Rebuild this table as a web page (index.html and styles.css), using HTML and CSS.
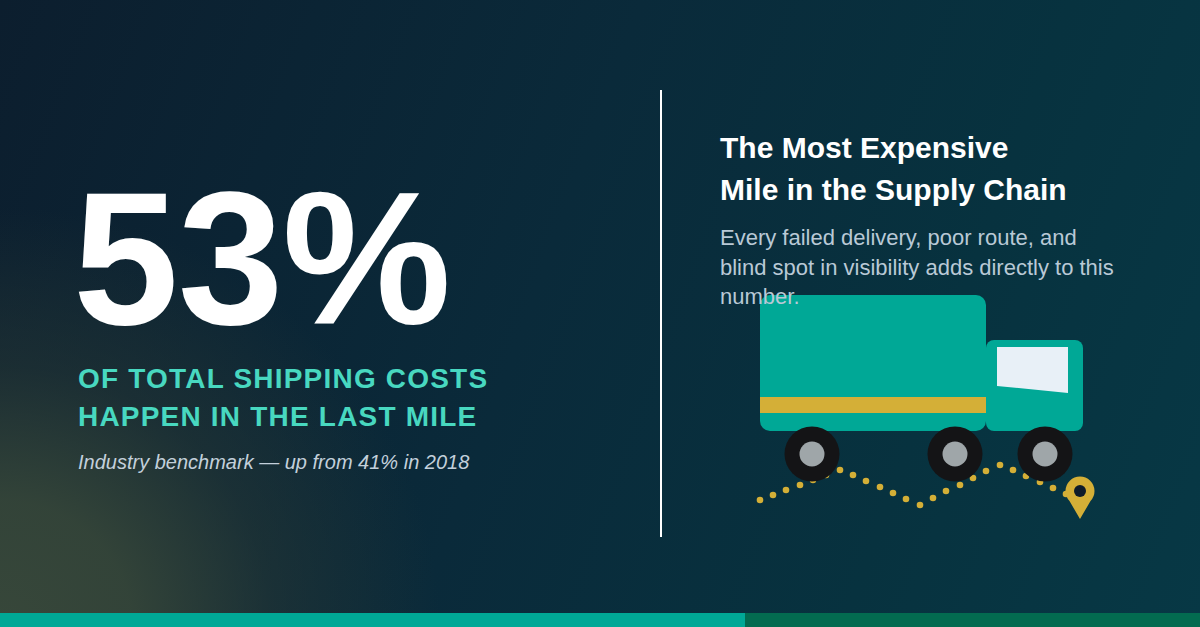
FILE: index.html
```html
<!DOCTYPE html>
<html lang="en">
<head>
<meta charset="utf-8">
<title>53% of total shipping costs happen in the last mile</title>
<link rel="stylesheet" href="styles.css">
</head>
<body>
<div class="page">
  <div class="stage">
    <section class="stat">
      <div class="stat-number">53%</div>
      <div class="stat-label">OF TOTAL SHIPPING COSTS<br>HAPPEN IN THE LAST MILE</div>
      <div class="stat-note">Industry benchmark — up from 41% in 2018</div>
    </section>
    <div class="divider"></div>
    <section class="detail">
      <h2 class="detail-title">The Most Expensive<br>Mile in the Supply Chain</h2>
      <p class="detail-text">Every failed delivery, poor route, and blind spot in visibility adds directly to this number.</p>
      <svg class="truck" viewBox="750 290 350 235" width="350" height="235" aria-hidden="true">
        <g fill="#d4af37">
          <circle cx="760" cy="500" r="3.3"/><circle cx="773" cy="495" r="3.3"/><circle cx="786" cy="490" r="3.3"/>
          <circle cx="800" cy="485" r="3.3"/><circle cx="813" cy="480" r="3.3"/><circle cx="826" cy="475" r="3.3"/>
          <circle cx="840" cy="470" r="3.3"/><circle cx="853" cy="475" r="3.3"/><circle cx="866" cy="481" r="3.3"/>
          <circle cx="880" cy="487" r="3.3"/><circle cx="893" cy="493" r="3.3"/><circle cx="906" cy="499" r="3.3"/>
          <circle cx="920" cy="505" r="3.3"/><circle cx="933" cy="498" r="3.3"/><circle cx="946" cy="491" r="3.3"/>
          <circle cx="960" cy="485" r="3.3"/><circle cx="973" cy="478" r="3.3"/><circle cx="986" cy="471" r="3.3"/>
          <circle cx="1000" cy="465" r="3.3"/><circle cx="1013" cy="470" r="3.3"/><circle cx="1026" cy="476" r="3.3"/>
          <circle cx="1040" cy="482" r="3.3"/><circle cx="1053" cy="488" r="3.3"/><circle cx="1066" cy="494" r="3.3"/>
        </g>
        <rect x="760" y="295" width="226" height="136" rx="10" fill="#00a896"/>
        <rect x="760" y="397" width="226" height="16" fill="#d4af37"/>
        <rect x="986" y="340" width="97" height="91" rx="8" fill="#00a896"/>
        <polygon points="997,347 1068,347 1068,393 997,386" fill="#e8f0f7"/>
        <circle cx="812" cy="454" r="27.5" fill="#141416"/>
        <circle cx="812" cy="454" r="12.5" fill="#9fa6a9"/>
        <circle cx="955" cy="454" r="27.5" fill="#141416"/>
        <circle cx="955" cy="454" r="12.5" fill="#9fa6a9"/>
        <circle cx="1045" cy="454" r="27.5" fill="#141416"/>
        <circle cx="1045" cy="454" r="12.5" fill="#9fa6a9"/>
        <path d="M1080 519 L1069.5 501 A14.5 14.5 0 1 1 1090.5 501 Z" fill="#d4af37"/>
        <circle cx="1080" cy="491" r="6" fill="#0d1b2a"/>
      </svg>
    </section>
  </div>
  <div class="progress">
    <div class="progress-fill"></div>
  </div>
</div>
</body>
</html>
```
FILE: styles.css
```css
html, body {
  margin: 0;
  padding: 0;
}

body {
  font-family: "Liberation Sans", Arial, sans-serif;
  background: #0b2230;
}

.page {
  width: 1200px;
  height: 627px;
  overflow: hidden;
  display: flex;
  flex-direction: column;
  background:
    radial-gradient(ellipse 440px 420px at 0% 100%, #37473a 0%, rgba(54, 70, 57, 0.92) 30%, rgba(42, 58, 53, 0.5) 62%, rgba(12, 38, 50, 0) 100%),
    linear-gradient(110deg, #0c1e2e 0%, #0a2a3a 45%, #07323f 75%, #073845 100%);
}

.stage {
  height: 613px;
  display: flex;
  align-items: flex-start;
}

.stat {
  width: 582px;
  padding-left: 78px;
  padding-top: 163px;
}

.stat-number {
  font-size: 190px;
  line-height: 190px;
  font-weight: 700;
  color: #ffffff;
  margin-left: -5px;
  letter-spacing: -1px;
}

.stat-label {
  margin-top: 7px;
  font-size: 28px;
  line-height: 38px;
  font-weight: 700;
  letter-spacing: 1.2px;
  color: #48d8c0;
}

.stat-note {
  margin-top: 12px;
  font-size: 20px;
  line-height: 28px;
  font-style: italic;
  color: #c3d0db;
}

.divider {
  width: 2px;
  height: 447px;
  margin-top: 90px;
  background: #ffffff;
}

.detail {
  padding-left: 58px;
  padding-top: 127px;
  width: 420px;
}

.detail-title {
  margin: 0;
  font-size: 30px;
  line-height: 42px;
  font-weight: 700;
  color: #ffffff;
}

.detail-text {
  position: relative;
  z-index: 1;
  margin: 12px 0 0;
  width: 400px;
  font-size: 22px;
  line-height: 29.7px;
  color: #b9c9d6;
}

.truck {
  display: block;
  margin-top: -22px;
  margin-left: 30px;
}

.progress {
  height: 14px;
  background: #036b50;
}

.progress-fill {
  width: 745px;
  height: 100%;
  background: #00a896;
}
```
